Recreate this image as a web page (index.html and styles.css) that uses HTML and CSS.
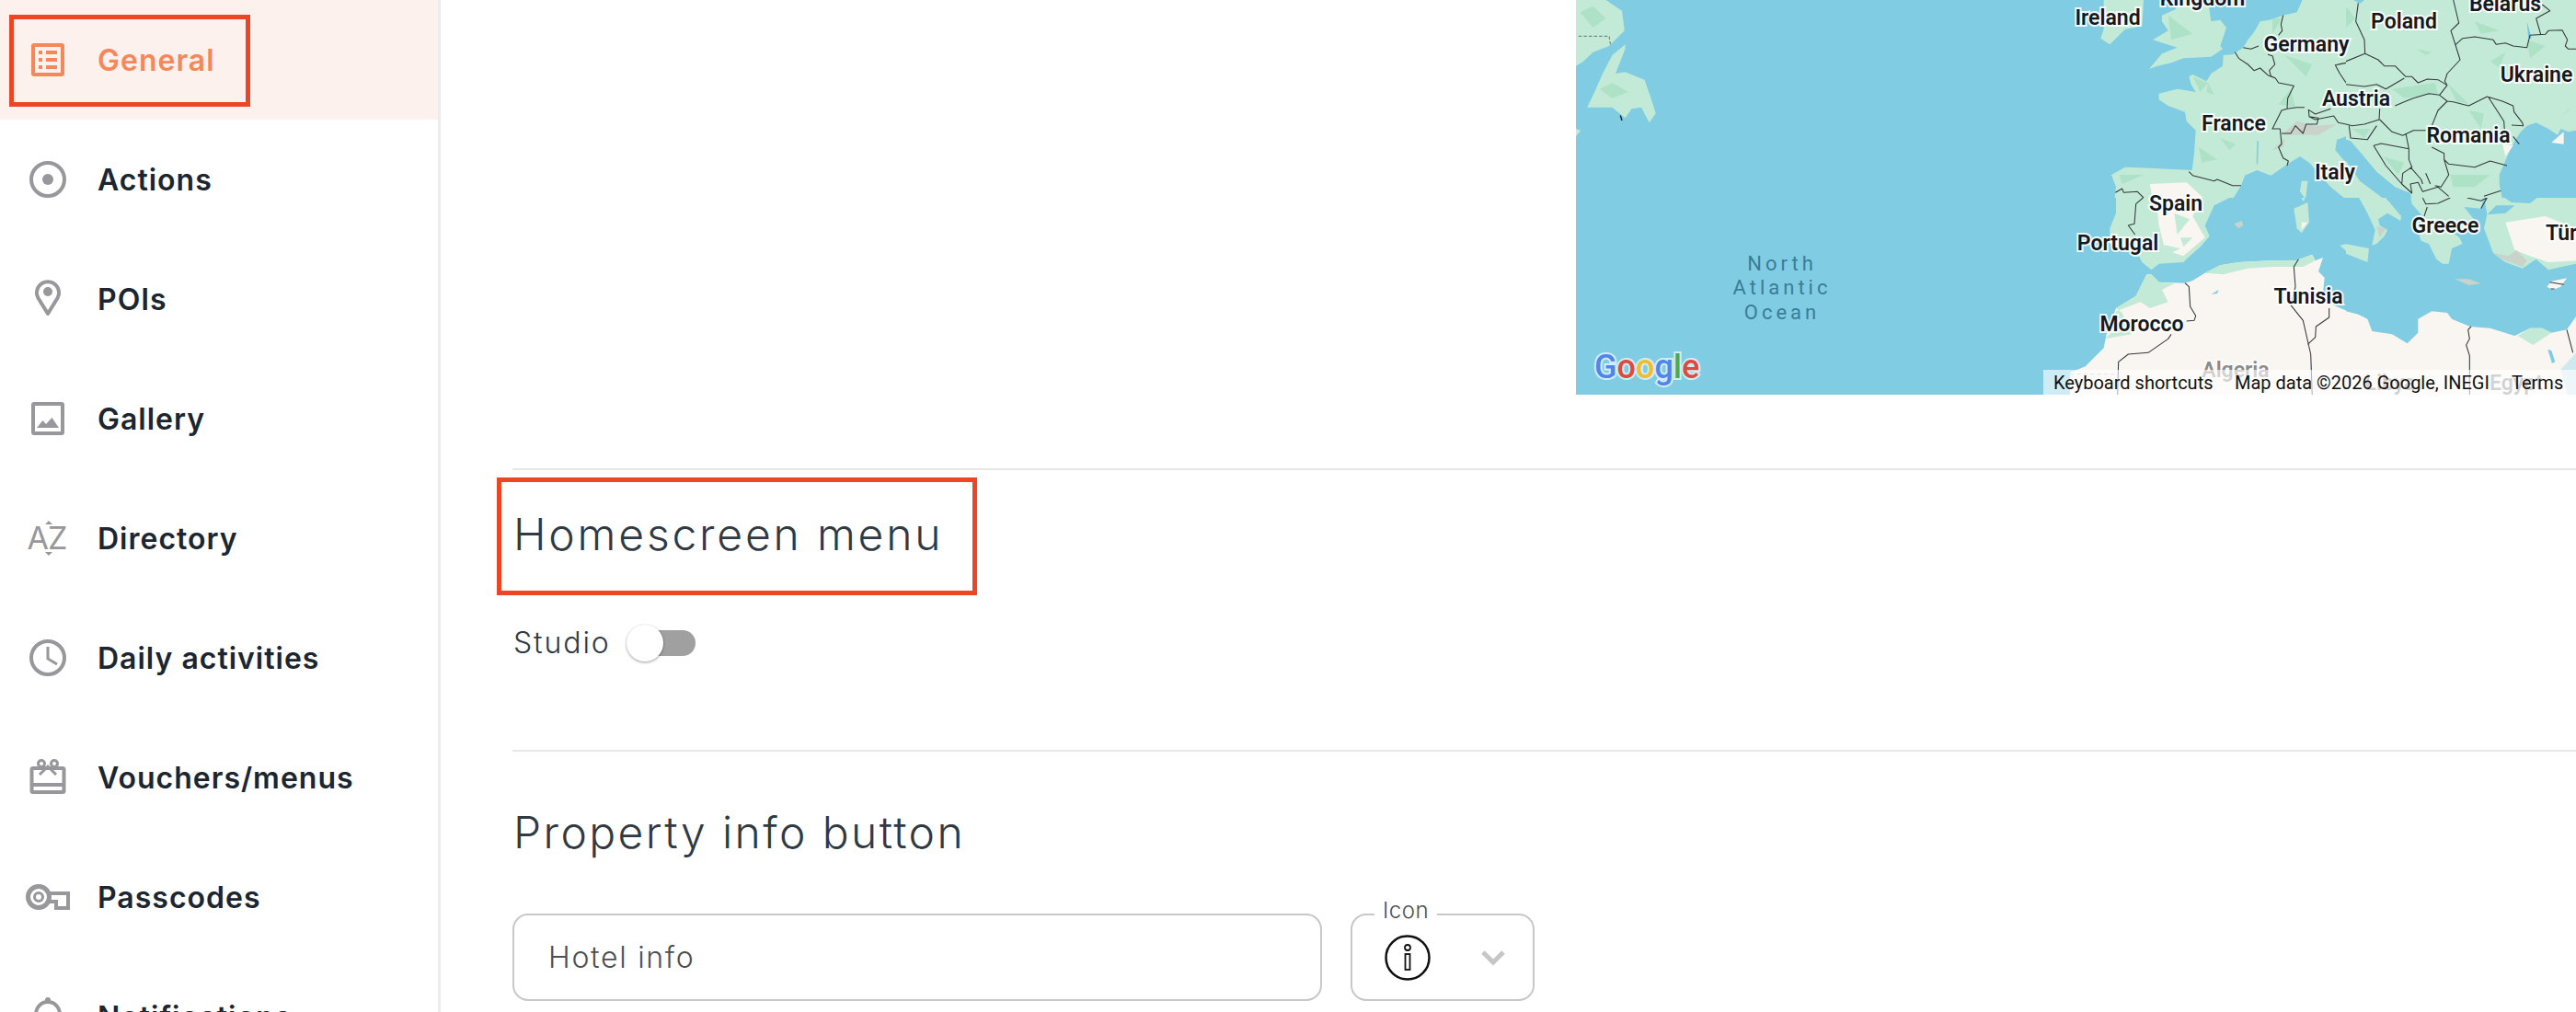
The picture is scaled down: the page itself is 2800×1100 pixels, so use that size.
FILE: index.html
```html
<!DOCTYPE html>
<html lang="en">
<head>
<meta charset="utf-8">
<title>General</title>
<link rel="stylesheet" href="styles.css">
</head>
<body>
<div class="app">
  <nav class="nav">
    <a class="item active">
      <svg class="ico" viewBox="0 0 72 72"><rect x="20" y="20" width="32" height="32" rx="1" class="st"/><path class="fl" d="M26 26h4v4h-4zM34 26h12v4H34zM26 34h4v4h-4zM34 34h12v4H34zM26 42h4v4h-4zM34 42h12v4H34z"/></svg>
      <span>General</span>
      <i class="mark mark-nav"></i>
    </a>
    <a class="item">
      <svg class="ico" viewBox="0 0 72 72"><circle cx="36" cy="36" r="18" class="st"/><circle cx="36" cy="36" r="6" class="fl"/></svg>
      <span>Actions</span>
    </a>
    <a class="item">
      <svg class="ico" viewBox="0 0 72 72"><path class="st" d="M36 52 L25.500 35 A12 12 0 1 1 46.500 35 Z" stroke-linejoin="round"/><circle cx="36" cy="28" r="5" class="fl"/></svg>
      <span>POIs</span>
    </a>
    <a class="item">
      <svg class="ico" viewBox="0 0 72 72"><rect x="20" y="20" width="32" height="32" rx="1" class="st"/><path class="fl" d="M24 46 L30.500 38 L34 42 L40.500 35 L48 46 Z"/></svg>
      <span>Gallery</span>
    </a>
    <a class="item">
      <svg class="ico" viewBox="0 0 72 72"><text x="35" y="48" class="az">AZ</text><path class="fl" d="M33 21 L37 17 L41 21 Z M33 51 L41 51 L37 55 Z"/></svg>
      <span>Directory</span>
    </a>
    <a class="item">
      <svg class="ico" viewBox="0 0 72 72"><circle cx="36" cy="36" r="18" class="st"/><path d="M36 24 V37 L46 43" class="thin"/></svg>
      <span>Daily activities</span>
    </a>
    <a class="item">
      <svg class="ico" viewBox="0 0 72 72"><rect x="18.500" y="26" width="35" height="26" rx="1.500" class="st"/><path class="fl" d="M18 42h36v4H18z"/><circle cx="29" cy="21" r="3.500" class="thin"/><circle cx="43" cy="21" r="3.500" class="thin"/><path class="thin" d="M27 33 L36 24 L45 33"/></svg>
      <span>Vouchers/menus</span>
    </a>
    <a class="item">
      <svg class="ico" viewBox="0 0 72 72"><circle cx="26" cy="36" r="11.500" class="key"/><circle cx="26" cy="36" r="4.500" class="thin"/><path class="st" d="M37 32 H58 V48 H45 V41 H37"/></svg>
      <span>Passcodes</span>
    </a>
    <a class="item">
      <svg class="ico" viewBox="0 0 72 72"><circle cx="36" cy="33" r="13" class="st"/><circle cx="36" cy="18" r="3" class="fl"/></svg>
      <span>Notifications</span>
    </a>
  </nav>

  <main class="main">
    <div class="map-row">
      <div class="map">
        <svg class="map-svg" viewBox="1713 0 1087 429">
          <rect x="1713" y="0" width="1087" height="429" class="sea"/>
          <g transform="translate(1700 0) scale(.35 .3333)">
            <path class="land" d="M37 0 L130 0 L180 35 L188 100 L140 150 L90 170 L60 200 L37 215 Z"/>
            <path class="land" d="M190 145 L150 180 L120 240 L95 300 L72 350 L150 350 L190 385 L210 355 L240 350 L265 400 L285 370 L270 320 L250 260 L190 235 L160 240 L190 160 Z"/>
            <path class="land" d="M37 420 L52 425 L37 445 Z"/>
            <path class="relief" d="M50 40 L90 20 L130 60 L90 90 Z M110 290 L150 270 L200 300 L150 320 Z"/>
            <path class="border dash" d="M45 118 L140 118 L145 150"/>
            <path class="note" d="M175 376 L180 393"/>
          </g>

          <!-- north-west -->
          <svg x="2250" y="0" width="300" height="215" viewBox="0 0 900 645">
            <path class="land" d="M110 0 L240 0 L235 85 L180 95 L130 145 L100 125 L110 95 Z"/>
            <path class="land" d="M300 50 L345 30 L350 0 L450 0 L460 70 L490 65 L510 90 L490 150 L498 160 L460 185 L370 190 L330 205 L285 215 L258 225 L300 175 L350 155 L270 130 L320 100 L300 70 Z"/>
            <path class="land" d="M900 -5 L760 -5 L740 40 L695 50 L650 65 L620 70 L600 105 L580 130 L565 155 L530 178 L500 180 L498 215 L460 240 L445 265 L400 243 L388 250 L395 275 L410 300 L350 290 L290 305 L290 325 L320 345 L375 365 L380 395 L410 425 L405 500 L398 555 L260 548 L180 545 L135 570 L150 610 L145 650 L530 650 L558 605 L570 572 L610 555 L655 572 L710 535 L750 510 L780 530 L820 575 L850 610 L900 650 L1000 650 L1000 -5 Z"/>
            <path class="sea" d="M870 456 L865 490 L900 530 L1000 600 L1000 440 L900 445 Z"/>
            <path class="land" d="M755 590 L775 590 L768 650 L750 625 Z"/>
            <path class="desert" d="M260 600 L380 595 L440 650 L270 650 Z"/>
            <path class="relief" d="M680 340 L720 290 L735 350 Z M700 180 L790 210 L770 250 Z M490 450 L540 470 L520 490 Z M420 480 L480 520 L430 530 Z M400 250 L450 270 L425 300 Z M320 50 L400 110 L330 130 Z M660 60 L690 60 L660 110 Z M160 570 L240 570 L170 600 Z M450 270 L470 310 L445 300 Z"/>
            <path class="rock" d="M690 440 L740 395 L800 410 L870 405 L810 440 L740 440 Z M660 490 L700 450 L695 480 Z"/>
            <path class="sea" d="M610 460 L615 460 L612 540 L608 530 Z"/>
            <path class="border" d="M565 155 L590 160 L615 150 M538 170 L550 190 L580 210 L600 230 L620 222 L645 245 L670 255 L680 270 L730 280 L710 320 L708 355 L690 360 L660 420 L685 420 L690 470 L680 480 L695 515 L712 525 L708 540 M695 50 L688 80 L692 100 L680 115 M645 178 L660 182 L668 210 L650 230 L655 248 L670 255 M708 355 L740 350 L765 350 M690 435 L720 435 L735 410 L760 435 L770 405 L805 405 L810 385 L780 380 L778 358 L800 372 L850 355 M780 380 L800 390 L860 378 L875 400 L900 405 M388 560 L400 572 L470 590 L480 585 L530 605 L558 605 M148 628 L170 615 L175 628 L220 625 L240 645 M900 205 L865 212 L880 240 L900 270"/>
          </svg>

          <!-- north-east -->
          <svg x="2550" y="0" width="250" height="215" viewBox="0 0 750 645">
            <rect x="0" y="0" width="750" height="645" class="land"/>
            <path class="sea" d="M0 455 L15 460 L50 500 L100 560 L160 610 L210 630 L215 650 L125 650 L45 590 L0 525 Z"/>
            <path class="sea" d="M750 425 L725 430 L700 420 L690 440 L660 420 L620 400 L590 410 L570 430 L550 460 L530 500 L500 570 L500 600 L510 650 L750 650 Z"/>
            <path class="sea" d="M25 0 L60 0 L45 12 Z"/>
            <path class="relief" d="M150 290 L290 270 L300 305 L190 320 Z M330 270 L400 340 L360 330 Z M400 360 L450 370 L440 420 Z M420 70 L500 100 L440 110 Z M470 200 L520 170 L500 220 Z M590 130 L650 150 L600 190 Z M230 160 L280 170 L260 180 Z M120 510 L190 530 L170 570 Z M340 570 L470 570 L420 610 L350 610 Z M20 420 L80 420 L60 450 Z M0 20 L30 60 L0 90 Z"/>
            <path class="sea-bright" d="M590 70 L605 125 L595 125 Z M700 380 L735 350 L725 360 Z"/>
            <path class="desert" d="M510 470 L545 475 L520 510 Z M670 465 L710 430 L710 470 Z"/>
            <path class="border" d="M40 10 L32 70 L60 130 L62 175 M0 200 L62 175 L105 195 L125 215 L160 215 L195 250 L215 250 L235 270 L265 258 L300 260 L330 278 M130 290 L190 255 M0 275 L60 282 L100 275 L130 290 M305 310 L270 305 L220 320 L195 330 L160 345 M330 278 L305 310 L330 330 M350 0 L368 75 L342 100 L358 150 L372 195 L330 240 L322 265 L330 278 M358 145 L380 125 L420 120 L480 130 L490 145 L520 140 L545 150 L590 155 L600 115 L650 112 L660 100 L705 98 L722 130 L715 150 L725 160 L750 160 M620 60 L635 112 M620 60 L665 35 L640 15 M330 330 L300 360 L280 410 M330 330 L350 332 L400 345 L460 315 L510 330 L545 345 L548 365 L575 400 L578 410 L540 408 M465 318 L515 395 L518 440 M545 445 L565 470 M280 480 L320 500 L320 520 L335 535 L420 545 L470 525 L525 540 M110 355 L108 390 L60 405 L20 410 L0 405 M110 390 L150 430 L185 442 L220 425 L260 425 M10 410 L15 450 L70 455 L100 410 M90 475 L115 468 L205 485 L205 520 L215 545 L185 565 L182 600 L130 540 L90 475 M195 435 L205 485 M210 545 L245 585 L250 600 M320 520 L335 570 L310 610 L290 605 M260 565 L275 600 M182 600 L215 630 L210 600 L235 595 L250 625 L300 610 L335 640 M450 640 L505 622"/>
          </svg>

          <!-- south-west -->
          <svg x="2250" y="215" width="300" height="215" viewBox="0 0 900 645">
            <path class="land" d="M150 -5 L530 -5 L470 25 L440 90 L455 125 L425 160 L385 195 L370 210 L290 215 L265 235 L235 210 L220 180 L130 150 L130 100 L150 50 Z"/>
            <path class="desert" d="M280 -5 L430 -5 L400 60 L440 130 L370 190 L310 170 L290 90 Z"/>
            <path class="land" d="M340 50 L390 70 L350 120 Z M360 130 L400 130 L370 160 Z M430 60 L470 20 L440 90 Z M290 150 L360 165 L310 190 Z"/>
            <path class="land" d="M730 35 L775 15 L780 80 L755 115 L740 100 Z"/>
            <path class="desert" d="M755 80 L775 80 L755 105 Z"/>
            <path class="land" d="M768 -5 L750 -5 L762 12 Z"/>
            <path class="rock" d="M535 85 L560 75 L565 90 L550 100 Z"/>
            <path class="land" d="M880 155 L905 150 L905 178 Z"/>
            <path class="desert" d="M0 570 L50 550 L110 490 L120 440 L150 360 L215 320 L250 250 L265 250 L290 275 L375 278 L400 270 L440 245 L490 220 L550 210 L650 205 L735 205 L790 185 L800 205 L825 195 L810 240 L830 260 L825 310 L860 350 L905 370 L905 650 L0 650 Z"/>
            <path class="land" d="M250 250 L265 250 L290 275 L340 280 L300 300 L320 340 L260 360 L230 340 L150 370 L130 445 L115 460 L200 445 L170 375 L150 360 L215 320 Z"/>
            <path class="land" d="M440 245 L490 220 L550 210 L650 205 L735 205 L790 185 L800 205 L760 225 L660 225 L580 230 L500 250 Z"/>
            <path class="sea" d="M460 315 L485 300 L480 312 Z"/>
            <path class="border" d="M238 0 L215 20 L210 85 L190 90 L212 120 M375 278 L388 290 L392 355 L410 385 L405 400 L380 402 M330 445 L320 460 L255 505 L190 510 L158 535 L155 645 M745 200 L730 225 L735 290 L720 350 L760 400 L785 510 L790 645 M845 360 L845 390 L802 420 L800 455 L775 478"/>
            <path class="border dash-soft" d="M0 575 L155 575"/>
          </svg>

          <!-- south-east -->
          <svg x="2550" y="215" width="250" height="215" viewBox="0 0 750 645">
            <path class="land" d="M40 -5 L125 -5 L180 60 L178 75 L135 50 L105 70 L110 90 L135 105 L125 125 L100 150 L85 155 L95 105 L70 50 Z"/>
            <path class="land" d="M-5 150 L75 165 L70 210 L-5 180 Z"/>
            <path class="land" d="M210 -5 L215 20 L250 60 L220 65 L245 140 L270 150 L295 200 L315 215 L335 215 L345 165 L380 150 L370 130 L350 115 L440 100 L385 30 L440 35 L450 -5 Z"/>
            <path class="land" d="M450 -5 L750 -5 L750 215 L660 235 L620 200 L575 230 L520 210 L480 180 L450 100 L460 55 Z"/>
            <path class="sea" d="M510 -5 L630 -5 L600 18 L540 15 Z M490 25 L550 25 L520 50 L460 55 Z"/>
            <path class="desert" d="M520 80 L650 60 L750 100 L750 205 L660 210 L600 190 L550 170 Z"/>
            <path class="rock" d="M480 180 L520 205 L575 225 L590 205 L555 170 L530 190 Z M100 92 L130 100 L110 130 Z"/>
            <path class="rock" d="M355 265 L400 265 L440 280 L400 285 Z"/>
            <path class="desert" d="M655 290 L670 272 L720 262 L700 290 L675 300 Z"/>
            <path class="desert" d="M0 370 L40 380 L70 395 L85 435 L150 445 L200 475 L235 440 L235 395 L280 370 L330 375 L345 395 L405 420 L470 425 L550 450 L600 425 L640 425 L670 440 L720 430 L755 380 L755 650 L0 650 Z"/>
            <path class="land" d="M560 450 L600 425 L640 425 L670 440 L610 480 Z"/>
            <path class="sea" d="M658 495 L670 498 L682 535 L672 540 Z"/>
            <path class="pale" d="M700 560 L755 500 L755 650 L725 650 Z"/>
            <path class="border" d="M408 420 L398 430 L403 460 L392 480 L403 515 L403 645 M720 430 L740 505 M265 30 L255 60 M250 0 L260 20 L300 18 L340 0 M395 0 L440 10 L460 0 L440 35 M665 275 L710 283 M668 297 L680 297"/>
          </svg>

          <text class="ocean" x="1937" y="294">North</text>
          <text class="ocean" x="1937" y="320">Atlantic</text>
          <text class="ocean" x="1937" y="347">Ocean</text>
          <text class="lbl" x="2291" y="27">Ireland</text>
          <text class="lbl" x="2394" y="6">Kingdom</text>
          <text class="lbl" x="2507" y="56">Germany</text>
          <text class="lbl" x="2613" y="31">Poland</text>
          <text class="lbl" x="2723" y="12">Belarus</text>
          <text class="lbl" x="2757" y="89">Ukraine</text>
          <text class="lbl" x="2561" y="115">Austria</text>
          <text class="lbl" x="2428" y="142">France</text>
          <text class="lbl" x="2683" y="155">Romania</text>
          <text class="lbl" x="2538" y="195">Italy</text>
          <text class="lbl" x="2365" y="229">Spain</text>
          <text class="lbl" x="2302" y="272">Portugal</text>
          <text class="lbl" x="2658" y="253">Greece</text>
          <text class="lbl" x="2805" y="261">Türkiye</text>
          <text class="lbl" x="2509" y="330">Tunisia</text>
          <text class="lbl" x="2328" y="360">Morocco</text>
          <text class="lbl lbl-soft" x="2430" y="410">Algeria</text>
          <text class="lbl lbl-soft" x="2598" y="424">Libya</text>
          <text class="lbl lbl-soft" x="2735" y="424">Egypt</text>
          <text class="logo" x="1733" y="411"><tspan class="g-b">G</tspan><tspan class="g-r">o</tspan><tspan class="g-y">o</tspan><tspan class="g-b">g</tspan><tspan class="g-g">l</tspan><tspan class="g-r">e</tspan></text>
        </svg>
        <div class="attr">
          <span class="attr-key">Keyboard shortcuts</span>
          <span class="attr-data">Map data ©2026 Google, INEGI</span>
          <span class="attr-terms">Terms</span>
        </div>
      </div>
    </div>

    <section class="sec sec-home">
      <h2 class="title">Homescreen menu</h2>
      <i class="mark mark-title"></i>
      <div class="toggle-row">
        <span class="toggle-label">Studio</span>
        <span class="toggle"><span class="knob"></span></span>
      </div>
    </section>

    <section class="sec sec-info">
      <h2 class="title">Property info button</h2>
      <div class="fields">
        <div class="field field-text">Hotel info</div>
        <div class="field field-icon">
          <span class="legend">Icon</span>
          <svg class="info" viewBox="0 0 52 52"><circle cx="26" cy="26" r="23.500"/><circle cx="26" cy="15" r="3"/><rect x="23.500" y="22" width="5" height="17"/></svg>
          <svg class="chev" viewBox="0 0 28 18"><path d="M3 3 L14 14 L25 3"/></svg>
        </div>
      </div>
    </section>
  </main>
</div>
</body>
</html>
```

FILE: styles.css
```css
* { box-sizing: border-box; }
html, body { margin: 0; height: 1100px; overflow: hidden; background: #fff; }
body { font-family: Inter, "Open Sans", sans-serif; }

.app { display: flex; height: 1100px; overflow: hidden; }

/* sidebar */
.nav {
  width: 479px; flex: none; height: 1100px; overflow: hidden;
  border-right: 3px solid #ececec;
}
.item {
  position: relative; display: flex; align-items: center; height: 130px;
  padding-left: 16px; gap: 18px;
  font-size: 32px; font-weight: 600; letter-spacing: 1px; color: #1c2631;
}
.active { background: #fdf1ed; color: #f5875a; margin-right: -3px; }
.ico { width: 72px; height: 72px; flex: none; color: #97979c; }
.active .ico { color: #f5875a; }
.st { fill: none; stroke: currentColor; stroke-width: 4; }
.key { fill: none; stroke: currentColor; stroke-width: 5; }
.thin { fill: none; stroke: currentColor; stroke-width: 3; }
.fl { fill: currentColor; }
.az { font-family: Inter, sans-serif; font-size: 34px; font-weight: 400; fill: currentColor; text-anchor: middle; letter-spacing: -1px; }

/* red annotation boxes */
.mark { position: absolute; border: 5px solid #ee4526; display: block; }
.mark-nav { left: 10px; top: 16px; width: 262px; height: 100px; }
.mark-title { left: -17px; top: 8px; width: 522px; height: 128px; }

/* main */
.main { flex: 1; min-width: 0; padding-left: 78px; }
.map-row { display: flex; justify-content: flex-end; height: 429px; margin-left: -78px; }
.map { position: relative; width: 1087px; height: 429px; overflow: hidden; }
.map-svg { display: block; width: 1087px; height: 429px; }
.sea { fill: #80cde3; }
.sea-bright { fill: #6cc4e6; }
.pale { fill: #cfe9ef; }
.land { fill: #c3ead6; }
.relief { fill: #aee2c6; }
.rock { fill: #c9d3ca; }
.desert { fill: #f9f6f1; }
.border { fill: none; stroke: #35393c; stroke-width: 3.200; stroke-linejoin: round; }
.dash { stroke-dasharray: 10 6; stroke-width: 2; }
.dash-soft { stroke: #b9b9b9; stroke-dasharray: 14 8; }
.note { fill: none; stroke: #222; stroke-width: 4; }
.lbl {
  font-family: Roboto, sans-serif; font-size: 23px; font-weight: 600; text-anchor: middle;
  fill: #15181c; stroke: #fff; stroke-width: 4px; paint-order: stroke; stroke-opacity: .85;
}
.lbl-soft { fill: #8a8a8a; stroke-opacity: .5; }
.ocean { font-family: Roboto, sans-serif; font-size: 22px; letter-spacing: 4px; fill: #3b7c98; text-anchor: middle; }
.logo { font-family: Roboto, sans-serif; font-size: 36px; font-weight: 500; stroke: #d4edf5; stroke-width: 4px; paint-order: stroke; }
.g-b { fill: #4f86ec; } .g-r { fill: #dd4b3e; } .g-y { fill: #f0bd2f; } .g-g { fill: #4ca853; }

.attr { position: absolute; right: 0; bottom: 0; height: 27px; width: 579px; display: flex;
  font-family: Roboto, sans-serif; font-size: 20px; line-height: 28px; color: #111; white-space: nowrap;
  background: rgba(255,255,255,.62); }
.attr-key { width: 194px; padding-left: 11px; }
.attr-data { width: 315px; padding-left: 14px; }
.attr-terms { flex: 1; }

/* sections */
.sec { position: relative; border-top: 2px solid #e7e7e7; }
.sec-home { margin-top: 80px; height: 306px; }
.sec-info { height: 286px; }
.title { margin: 0; padding-left: 1px; font-size: 48px; font-weight: 300; letter-spacing: 2.400px; color: #2f3a45; line-height: 56px; }
.sec-home .title { padding-top: 42px; height: 98px; box-sizing: content-box; letter-spacing: 2.800px; }
.sec-info .title { padding-top: 60px; height: 56px; box-sizing: content-box; }
.toggle-row { display: flex; align-items: center; gap: 19px; position: absolute; left: 0; top: 168px; }
.toggle-label { font-size: 32px; font-weight: 300; letter-spacing: 1.900px; color: #2f3a45; padding-left: 1px; }
.toggle { position: relative; display: block; width: 73px; height: 28px; border-radius: 14px; background: #a0a0a0; }
.knob { position: absolute; left: -2px; top: -6px; width: 40px; height: 40px; border-radius: 50%; background: #fff; box-shadow: 0 1px 3px rgba(0,0,0,.4); }

.fields { display: flex; gap: 31px; margin-top: 60px; }
.field { position: relative; height: 95px; border: 2px solid #c8c8c8; border-radius: 17px; display: flex; align-items: center; }
.field-text { width: 880px; padding-left: 37px; font-size: 32px; font-weight: 300; letter-spacing: 1.700px; color: #4c5055; }
.field-icon { width: 200px; justify-content: space-between; padding: 0 29px 0 34px; }
.legend { position: absolute; left: 24px; top: -19px; padding: 0 9px; background: linear-gradient(transparent 45%, #fff 45%); font-size: 24px; font-weight: 300; letter-spacing: .5px; color: #4c5055; line-height: 28px; }
.info { width: 52px; height: 52px; }
.info circle:first-child { fill: none; stroke: #111; stroke-width: 2.500; }
.info circle:nth-child(2), .info rect { fill: none; stroke: #111; stroke-width: 1.800; }
.chev { width: 28px; height: 18px; }
.chev path { fill: none; stroke: #c6c6c6; stroke-width: 5; }
```
